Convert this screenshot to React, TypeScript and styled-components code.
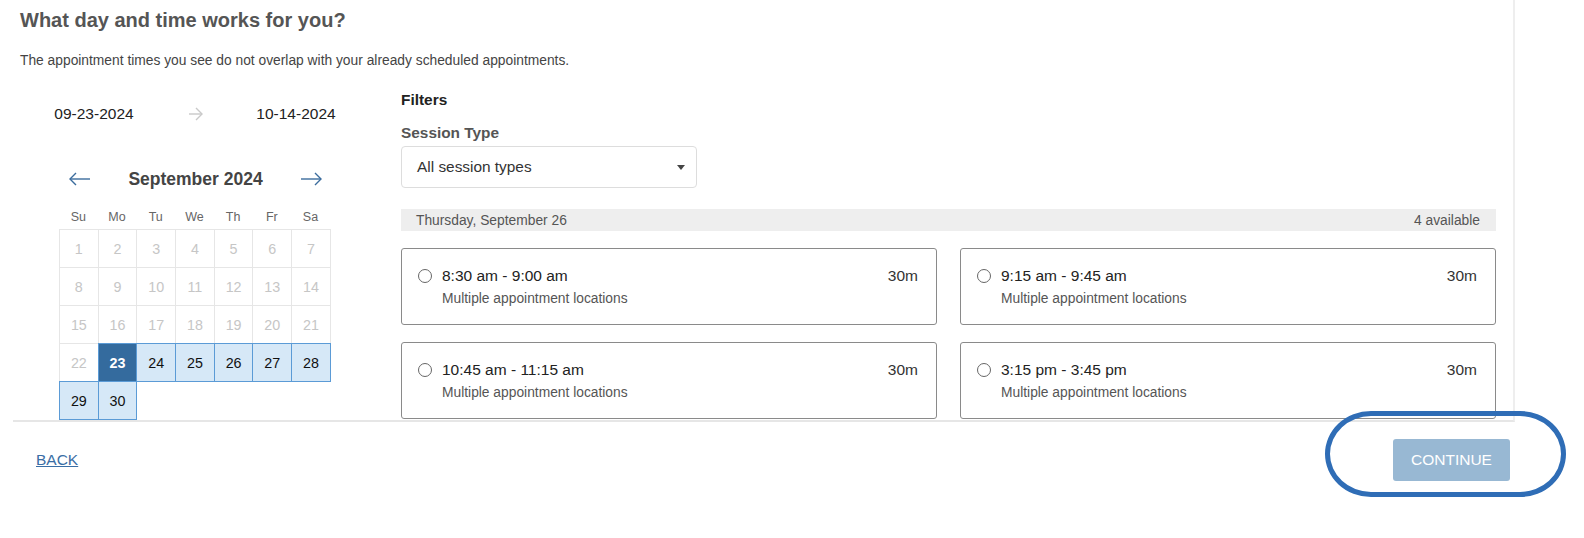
import React from 'react'
import styled, { createGlobalStyle } from 'styled-components'

const GlobalStyle = createGlobalStyle`
  * { box-sizing: border-box; }
  body {
    margin: 0;
    background: #fff;
    font-family: 'Liberation Sans', Arial, sans-serif;
    color: #222;
  }
`

const Page = styled.div`
  width: 1584px;
  height: 538px;
  padding-left: 13px;
  overflow: hidden;
`

const Panel = styled.main`
  width: 1502px;
  height: 422px;
  padding: 8px 0 0 7px;
  border-right: 2px solid #eeeeee;
  border-bottom: 2px solid #e6e6e6;
  overflow: hidden;
`

const Title = styled.h1`
  margin: 0;
  font-size: 20px;
  line-height: 24px;
  font-weight: bold;
  color: #555;
`

const Subtitle = styled.p`
  margin: 20px 0 0;
  font-size: 13.8px;
  line-height: 18px;
  color: #444;
`

const Body = styled.div`
  display: flex;
  margin-top: 20px;
`

const LeftCol = styled.section`
  width: 350px;
  display: flex;
  flex-direction: column;
  align-items: center;
`

const DateRow = styled.div`
  margin-top: 14px;
  display: flex;
  align-items: center;
  line-height: 20px;
  font-size: 15.5px;
  color: #222;
`

const DateCell = styled.div`
  width: 101px;
  display: flex;
  justify-content: center;
`

const CalHeader = styled.div`
  margin-top: 43px;
  width: 272px;
  height: 24px;
  padding: 0 9px 0 10px;
  display: flex;
  align-items: center;
  justify-content: space-between;
`

const MonthTitle = styled.div`
  font-size: 17.5px;
  font-weight: bold;
  color: #444;
`

const NavButton = styled.button`
  border: 0;
  background: none;
  padding: 0;
  width: 22px;
  height: 14px;
  display: flex;
  cursor: pointer;
`

const Weekdays = styled.div`
  margin-top: 18px;
  display: grid;
  grid-template-columns: repeat(7, 38.7px);
  width: 272px;
  line-height: 16px;
  font-size: 12.5px;
  color: #666;
  text-align: center;
`

const DayGrid = styled.div`
  margin-top: 4px;
  display: grid;
  grid-template-columns: repeat(7, 38.7px);
  grid-auto-rows: 38px;
  width: 272px;
`

type DayState = 'disabled' | 'available' | 'selected' | 'empty'

const Day = styled.div<{ $state: DayState }>`
  position: relative;
  width: calc(100% + 1px);
  height: calc(100% + 1px);
  display: flex;
  align-items: center;
  justify-content: center;
  font-size: 14.3px;
  border: 1px solid
    ${p => (p.$state === 'disabled' ? '#e6e6e6' : p.$state === 'empty' ? 'transparent' : '#5b9bd6')};
  background: ${p =>
    p.$state === 'selected' ? '#346b9e' : p.$state === 'available' ? '#d6e8f7' : 'transparent'};
  color: ${p => (p.$state === 'disabled' ? '#c6c6c6' : p.$state === 'selected' ? '#fff' : '#111')};
  font-weight: ${p => (p.$state === 'selected' ? 'bold' : 'normal')};
  z-index: ${p => (p.$state === 'selected' ? 2 : p.$state === 'available' ? 1 : 0)};
`

const RightCol = styled.section`
  flex: 1;
  margin-left: 31px;
  margin-right: 17px;
`

const FilterLabel = styled.div`
  font-size: 15.4px;
  line-height: 20px;
  font-weight: bold;
  color: #222;
`

const FieldLabel = styled.div`
  margin-top: 13px;
  font-size: 15.4px;
  line-height: 20px;
  font-weight: bold;
  color: #555;
`

const Select = styled.div`
  margin-top: 3px;
  width: 296px;
  height: 42px;
  border: 1px solid #dddddd;
  border-radius: 4px;
  padding: 0 11px 0 15px;
  display: flex;
  align-items: center;
  justify-content: space-between;
  font-size: 15.4px;
  color: #333;
`

const Caret = styled.span`
  width: 0;
  height: 0;
  border-left: 4.5px solid transparent;
  border-right: 4.5px solid transparent;
  border-top: 5px solid #444;
`

const DayBar = styled.div`
  margin-top: 21px;
  height: 22px;
  padding: 0 16px 0 15px;
  background: #eeeeee;
  display: flex;
  align-items: center;
  justify-content: space-between;
  font-size: 13.8px;
  color: #555;
`

const Slots = styled.div`
  margin-top: 17px;
  display: grid;
  grid-template-columns: 1fr 1fr;
  grid-auto-rows: 77px;
  column-gap: 23px;
  row-gap: 17px;
`

const Slot = styled.label`
  display: flex;
  align-items: flex-start;
  padding: 16px 18px 0 16px;
  border: 1px solid #8a8a8a;
  border-radius: 3px;
  cursor: pointer;
`

const Radio = styled.span`
  flex: none;
  width: 14px;
  height: 14px;
  margin: 4px 10px 0 0;
  border: 1px solid #666;
  border-radius: 50%;
  background: #fff;
`

const SlotInfo = styled.div`
  flex: 1;
`

const SlotTime = styled.div`
  font-size: 15.5px;
  line-height: 22px;
  color: #222;
`

const SlotPlace = styled.div`
  margin-top: 2px;
  font-size: 13.8px;
  line-height: 20px;
  color: #555;
`

const SlotLength = styled.div`
  font-size: 15.5px;
  line-height: 22px;
  color: #333;
`

const Footer = styled.footer`
  width: 1502px;
  height: 76px;
  padding: 0 5px 0 23px;
  display: flex;
  align-items: center;
  justify-content: space-between;
`

const BackLink = styled.a`
  font-size: 15.5px;
  color: #3a6ea5;
  text-decoration: underline;
  cursor: pointer;
`

const ButtonWrap = styled.div`
  position: relative;
`

const ContinueButton = styled.button`
  width: 117px;
  height: 42px;
  border: 0;
  border-radius: 3px;
  background: #98b8d3;
  color: #fff;
  font-family: 'Liberation Sans', Arial, sans-serif;
  font-size: 15.5px;
`

const Highlight = styled.span`
  position: absolute;
  left: -68px;
  top: -28px;
  width: 241px;
  height: 86px;
  border: 5px solid #2f6db6;
  border-radius: 46px / 43px;
  pointer-events: none;
  z-index: 5;
`

const LongArrow = ({ dir, color, width }: { dir: 'left' | 'right'; color: string; width: number }) => (
  <svg width={width} height="14" viewBox={`0 0 ${width} 14`} fill="none" stroke={color} strokeWidth="1.4">
    {dir === 'right' ? (
      <>
        <line x1="1" y1="7" x2={width - 1} y2="7" />
        <polyline points={`${width - 7},1 ${width - 1},7 ${width - 7},13`} />
      </>
    ) : (
      <>
        <line x1="1" y1="7" x2={width - 1} y2="7" />
        <polyline points="7,1 1,7 7,13" />
      </>
    )}
  </svg>
)

const weekdays = ['Su', 'Mo', 'Tu', 'We', 'Th', 'Fr', 'Sa']

const dayState = (d: number): DayState => {
  if (d > 30) return 'empty'
  if (d < 23) return 'disabled'
  if (d === 23) return 'selected'
  return 'available'
}

const slots = [
  { time: '8:30 am - 9:00 am' },
  { time: '9:15 am - 9:45 am' },
  { time: '10:45 am - 11:15 am' },
  { time: '3:15 pm - 3:45 pm' },
]

const App = () => {
  const days = Array.from({ length: 35 }, (_, i) => i + 1)

  return (
    <Page>
      <GlobalStyle />
      <Panel>
        <Title>What day and time works for you?</Title>
        <Subtitle>The appointment times you see do not overlap with your already scheduled appointments.</Subtitle>

        <Body>
          <LeftCol>
            <DateRow>
              <DateCell>09-23-2024</DateCell>
              <DateCell>
                <LongArrow dir="right" color="#c9c9c9" width={15} />
              </DateCell>
              <DateCell>10-14-2024</DateCell>
            </DateRow>

            <CalHeader>
              <NavButton aria-label="previous month">
                <LongArrow dir="left" color="#3b6c9d" width={22} />
              </NavButton>
              <MonthTitle>September 2024</MonthTitle>
              <NavButton aria-label="next month">
                <LongArrow dir="right" color="#3b6c9d" width={22} />
              </NavButton>
            </CalHeader>

            <Weekdays>
              {weekdays.map(w => (
                <div key={w}>{w}</div>
              ))}
            </Weekdays>

            <DayGrid>
              {days.map(d => (
                <Day key={d} $state={dayState(d)}>
                  {d <= 30 ? d : ''}
                </Day>
              ))}
            </DayGrid>
          </LeftCol>

          <RightCol>
            <FilterLabel>Filters</FilterLabel>
            <FieldLabel>Session Type</FieldLabel>
            <Select>
              All session types
              <Caret />
            </Select>

            <DayBar>
              <span>Thursday, September 26</span>
              <span>4 available</span>
            </DayBar>

            <Slots>
              {slots.map(s => (
                <Slot key={s.time}>
                  <Radio />
                  <SlotInfo>
                    <SlotTime>{s.time}</SlotTime>
                    <SlotPlace>Multiple appointment locations</SlotPlace>
                  </SlotInfo>
                  <SlotLength>30m</SlotLength>
                </Slot>
              ))}
            </Slots>
          </RightCol>
        </Body>
      </Panel>

      <Footer>
        <BackLink>BACK</BackLink>
        <ButtonWrap>
          <ContinueButton disabled>CONTINUE</ContinueButton>
          <Highlight />
        </ButtonWrap>
      </Footer>
    </Page>
  )
}

export default App
